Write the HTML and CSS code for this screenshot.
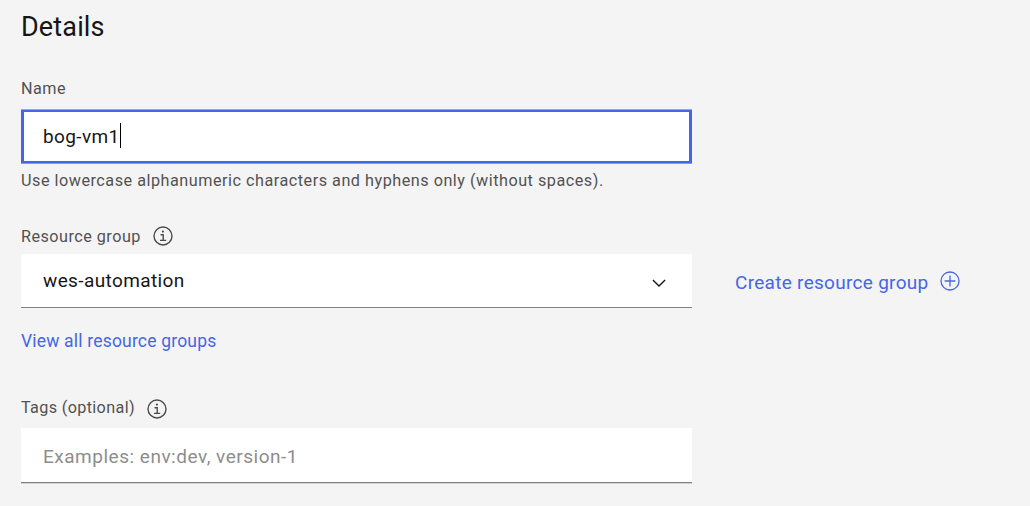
FILE: index.html
```html
<!DOCTYPE html>
<html lang="en">
<head>
<meta charset="utf-8">
<title>Details</title>
<link rel="stylesheet" href="styles.css">
</head>
<body>
<main class="details">
  <h2 class="heading">Details</h2>

  <section class="field">
    <div class="label-row"><span class="label">Name</span></div>
    <div class="control control-focus"><span class="value value-name">bog-vm1</span><span class="caret"></span></div>
    <p class="hint">Use lowercase alphanumeric characters and hyphens only (without spaces).</p>
  </section>

  <section class="field field-group">
    <div class="label-row">
      <span class="label">Resource group</span>
      <svg class="info" viewBox="0 0 20 20"><circle cx="10" cy="10" r="9"/><path d="M7.500 8.700H10.200V14.200M7 14.400H13.200"/><circle class="dot" cx="9.900" cy="5.600" r="1.100"/></svg>
    </div>
    <div class="group-row">
      <div class="control control-select">
        <span class="value">wes-automation</span>
        <svg class="chevron" viewBox="0 0 14 9"><path d="M.9 1.100L7 7.100L13.100 1.100"/></svg>
      </div>
      <a class="create"><span class="create-text">Create resource group</span><svg class="plus" viewBox="0 0 20 20"><circle cx="10" cy="10" r="9"/><path d="M10 4.600V15.400M4.600 10H15.400"/></svg></a>
    </div>
    <a class="view">View all resource groups</a>
  </section>

  <section class="field field-tags">
    <div class="label-row">
      <span class="label label-tags">Tags (optional)</span>
      <svg class="info info-tags" viewBox="0 0 20 20"><circle cx="10" cy="10" r="9"/><path d="M7.500 8.700H10.200V14.200M7 14.400H13.200"/><circle class="dot" cx="9.900" cy="5.600" r="1.100"/></svg>
    </div>
    <div class="control control-tags"><span class="value placeholder">Examples: env:dev, version-1</span></div>
  </section>
</main>
</body>
</html>
```
FILE: styles.css
```css
* { box-sizing: border-box; }
body {
  margin: 0;
  height: 506px;
  overflow: hidden;
  background: #f4f4f4;
  color: #161616;
  font-family: Roboto, "Liberation Sans", sans-serif;
}
.details { padding: 9px 0 0 21px; }
.heading { margin: 0; height: 69px; font-size: 27px; font-weight: 400; line-height: 36px; letter-spacing: .15px; }
.label-row { display: flex; align-items: center; height: 20px; color: #525252; }
.label { padding-top: 2px; font-size: 16.2px; line-height: 20px; white-space: nowrap; letter-spacing: .48px; }
.label-tags { padding-top: 1px; letter-spacing: .35px; }
.control { display: flex; align-items: center; width: 671px; background: #fff; }
.value { font-size: 19px; line-height: 24px; white-space: nowrap; letter-spacing: .38px; }
.value-name { padding-top: 2px; }
.control-focus {
  height: 53px;
  margin-top: 12px;
  padding: 0 0 1px 19px;
  border: solid #4566ea;
  border-width: 2px 3px;
  box-shadow: 0 -1px #93a5ef, 0 1px #8297ef;
}
.caret { width: 1px; height: 25px; margin-bottom: 1px; background: #000; }
.hint { margin: 8px 0 0; font-size: 16.2px; line-height: 20px; letter-spacing: .517px; color: #525252; white-space: nowrap; }
.field-group { margin-top: 35px; }
.info { width: 20px; height: 20px; margin-left: 12px; fill: none; stroke: #4b4b4b; stroke-width: 1.4; }
.info .dot { fill: #4b4b4b; stroke: none; }
.group-row { display: flex; align-items: center; margin-top: 8px; }
.control-select { height: 54px; padding: 0 26px 0 22px; justify-content: space-between; border-bottom: 1px solid #808080; }
.chevron { width: 14px; height: 9px; margin-top: 5px; fill: none; stroke: #161616; stroke-width: 1.4; }
.create { display: flex; align-items: center; margin-left: 43px; color: #4665e8; font-size: 19px; line-height: 24px; letter-spacing: .29px; white-space: nowrap; }
.create-text { padding-top: 3px; }
.plus { width: 20px; height: 20px; margin-left: 12px; fill: none; stroke: #4665e8; stroke-width: 1.3; }
.view { display: block; margin-top: 23px; font-size: 17.5px; line-height: 20px; letter-spacing: .19px; color: #4665e8; }
.field-tags { margin-top: 46px; }
.info-tags { margin: 3px 0 0 12.5px; }
.control-tags { height: 55px; margin-top: 11px; padding-left: 22px; border-bottom: 1px solid #808080; box-shadow: 0 1px #d4d4d4; }
.placeholder { padding-top: 3px; letter-spacing: .51px; color: #8d8d8d; }
```
